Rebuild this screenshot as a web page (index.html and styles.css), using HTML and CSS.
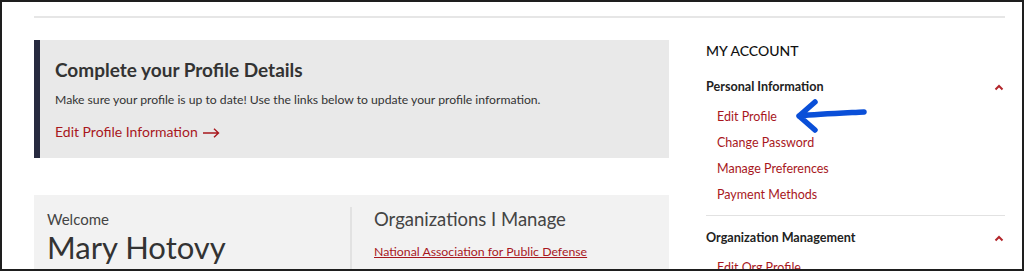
FILE: index.html
```html
<!DOCTYPE html>
<html lang="en">
<head>
  <meta charset="UTF-8" />
  <title>My Account</title>
  <link rel="stylesheet" href="styles.css">
</head>
<body>
  <div class="frame">
    <div class="page">
      <hr class="top-rule" />
      <div class="layout">
        <main class="main-col">
          <section class="notice">
            <h2 class="notice-title">Complete your Profile Details</h2>
            <p class="notice-text">Make sure your profile is up to date! Use the links below to update your profile information.</p>
            <a href="#" class="notice-link">Edit Profile Information
              <svg class="link-arrow" width="17" height="10" viewBox="0 0 17 10" aria-hidden="true"><path d="M0 5 H15.5 M11 0.8 L15.5 5 L11 9.2" fill="none" stroke="#a8171d" stroke-width="1.4"/></svg>
            </a>
          </section>

          <section class="welcome">
            <div class="welcome-name">
              <p class="welcome-label">Welcome</p>
              <h1 class="welcome-title">Mary Hotovy</h1>
            </div>
            <div class="welcome-orgs">
              <h3 class="orgs-title">Organizations I Manage</h3>
              <a href="#" class="orgs-link">National Association for Public Defense</a>
            </div>
          </section>
        </main>

        <aside class="sidebar">
          <h2 class="sidebar-title">MY ACCOUNT</h2>
          <div class="menu-group">
            <div class="menu-head">
              <span>Personal Information</span>
              <svg class="chevron" width="10" height="7" viewBox="0 0 10 7" aria-hidden="true"><path d="M1.5 5.5 L5 2 L8.5 5.5" fill="none" stroke="#b3262b" stroke-width="2"/></svg>
            </div>
            <ul class="menu-links">
              <li class="menu-item-pointed">
                <a href="#">Edit Profile</a>
                <svg class="pointer" width="76" height="40" viewBox="0 0 76 40" aria-hidden="true">
                  <path d="M4 20 C25 18 50 17 69 16 M20 6 L4 20 L20 34" fill="none" stroke="#0a4fd8" stroke-width="5.5" stroke-linecap="round" stroke-linejoin="round"/>
                </svg>
              </li>
              <li><a href="#">Change Password</a></li>
              <li><a href="#">Manage Preferences</a></li>
              <li><a href="#">Payment Methods</a></li>
            </ul>
          </div>
          <div class="menu-group menu-group-next">
            <div class="menu-head">
              <span>Organization Management</span>
              <svg class="chevron" width="10" height="7" viewBox="0 0 10 7" aria-hidden="true"><path d="M1.5 5.5 L5 2 L8.5 5.5" fill="none" stroke="#b3262b" stroke-width="2"/></svg>
            </div>
            <ul class="menu-links">
              <li><a href="#">Edit Org Profile</a></li>
            </ul>
          </div>
        </aside>
      </div>
    </div>
  </div>
</body>
</html>
```

FILE: styles.css
```css
/* Base */
*, *::before, *::after {
  box-sizing: border-box;
}
body {
  margin: 0;
  font-family: Lato, "Open Sans", sans-serif;
  color: #333;
  background: #fff;
}
.frame {
  width: 1024px;
  height: 271px;
  border: 2px solid #1e1e1e;
  overflow: hidden;
}
.page {
  padding: 14px 17px 0 32px;
}
.top-rule {
  margin: 0;
  border: 0;
  border-top: 2px solid #e6e6e6;
}
.layout {
  display: flex;
  gap: 37px;
  padding-top: 22px;
}

/* Main column */
.main-col {
  width: 635px;
  flex-shrink: 0;
}
.notice {
  background: #e9e9e9;
  border-left: 6px solid #272a3f;
  height: 118px;
  padding: 18px 15px 0;
}
.notice-title {
  margin: 0;
  font-size: 19px;
  line-height: 23px;
  font-weight: 700;
  color: #333;
}
.notice-text {
  margin: 11px 0 0;
  font-size: 12.2px;
  line-height: 16px;
  color: #333;
}
.notice-link {
  display: inline-flex;
  align-items: center;
  gap: 5px;
  margin-top: 15px;
  font-size: 14px;
  line-height: 18px;
  color: #a8171d;
  text-decoration: none;
}
.link-arrow {
  margin-top: 1px;
}
.welcome {
  margin-top: 37px;
  background: #f2f2f2;
  height: 80px;
  display: flex;
}
.welcome-name {
  width: 318px;
  padding: 3px 0 0 13px;
  border-right: 2px solid #e2e2e2;
  margin-top: 12px;
}
.welcome-label {
  margin: 0;
  font-size: 15px;
  line-height: 18px;
  color: #444;
}
.welcome-title {
  margin: 0;
  font-size: 31px;
  line-height: 38px;
  font-weight: 400;
  color: #333;
}
.welcome-orgs {
  padding: 13px 0 0 22px;
}
.orgs-title {
  margin: 0;
  font-size: 18.5px;
  line-height: 23px;
  font-weight: 400;
  color: #444;
}
.orgs-link {
  display: inline-block;
  margin-top: 13px;
  font-size: 12.3px;
  line-height: 16px;
  color: #a8171d;
}

/* Sidebar */
.sidebar {
  width: 299px;
  flex-shrink: 0;
}
.sidebar-title {
  margin: 0;
  padding-top: 2px;
  font-size: 14px;
  line-height: 18px;
  font-weight: 500;
  color: #111;
}
.menu-group {
  margin-top: 19px;
}
.menu-group-next {
  margin-top: 12px;
  padding-top: 14px;
  border-top: 1px solid #e2e2e2;
}
.menu-head {
  display: flex;
  justify-content: space-between;
  align-items: center;
  font-size: 12.6px;
  line-height: 16px;
  font-weight: 700;
  color: #222;
}
.chevron {
  margin-right: 1px;
}
.menu-links {
  list-style: none;
  margin: 0;
  padding: 0 0 0 11px;
}
.menu-links li {
  margin-top: 10px;
  font-size: 12.5px;
  line-height: 16px;
}
.menu-links li:first-child {
  margin-top: 14px;
}
.menu-links a {
  color: #a8171d;
  text-decoration: none;
}
.menu-item-pointed {
  position: relative;
}
.pointer {
  position: absolute;
  left: 78px;
  top: -13px;
}
```
